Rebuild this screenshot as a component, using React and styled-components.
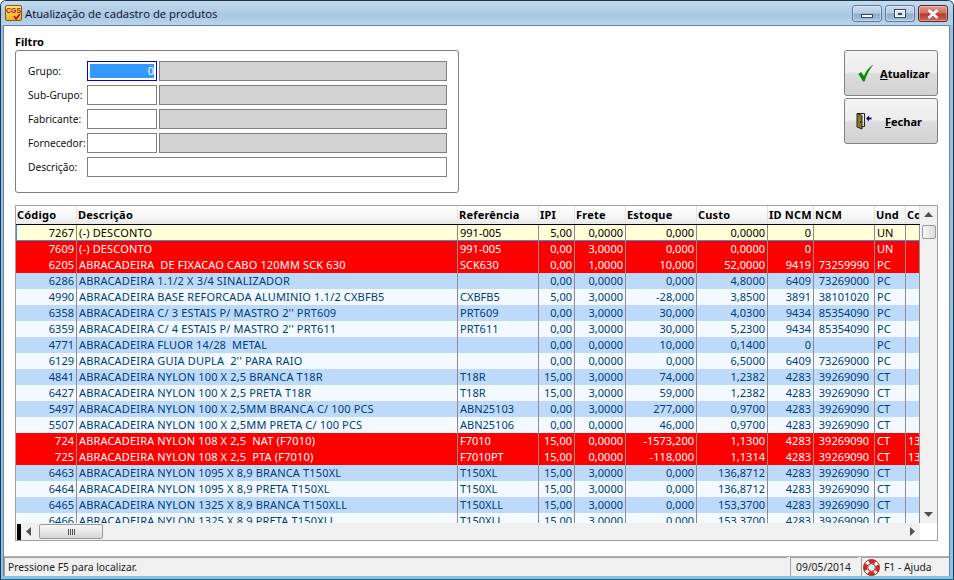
import React from 'react';
import styled, { createGlobalStyle } from 'styled-components';

const GlobalStyle = createGlobalStyle`
    html, body {
        margin: 0;
        padding: 0;
        background: #fff;
    }
    body {
        font-family: "Noto Sans", "Liberation Sans", sans-serif;
        font-size: 11px;
        color: #000;
    }
`;

const columns = [
    { key: 'id', title: 'Código', width: 61, align: 'right' },
    { key: 'desc', title: 'Descrição', width: 381, spaced: true },
    { key: 'ref', title: 'Referência', width: 81 },
    { key: 'ipi', title: 'IPI', width: 36, align: 'right' },
    { key: 'frete', title: 'Frete', width: 51, align: 'right' },
    { key: 'estoque', title: 'Estoque', width: 71, align: 'right' },
    { key: 'custo', title: 'Custo', width: 71, align: 'right' },
    { key: 'idNcm', title: 'ID NCM', width: 46, align: 'right' },
    { key: 'ncm', title: 'NCM', width: 61, align: 'center' },
    { key: 'und', title: 'Und', width: 31 },
    { key: 'co', title: 'Co', width: 14 },
];

const row = (id, desc, ref, ipi, frete, estoque, custo, idNcm, ncm, und, co = '', kind = 'normal') => (
    { id, desc, ref, ipi, frete, estoque, custo, idNcm, ncm, und, co, kind }
);

const rows = [
    row('7267', '(-) DESCONTO', '991-005', '5,00', '0,0000', '0,000', '0,0000', '0', '', 'UN', '', 'current'),
    row('7609', '(-) DESCONTO', '991-005', '0,00', '3,0000', '0,000', '0,0000', '0', '', 'UN', '', 'alert'),
    row('6205', 'ABRACADEIRA  DE FIXACAO CABO 120MM SCK 630', 'SCK630', '0,00', '1,0000', '10,000', '52,0000', '9419', '73259990', 'PC', '', 'alert'),
    row('6286', 'ABRACADEIRA 1.1/2 X 3/4 SINALIZADOR', '', '0,00', '0,0000', '0,000', '4,8000', '6409', '73269000', 'PC'),
    row('4990', 'ABRACADEIRA BASE REFORCADA ALUMINIO 1.1/2 CXBFB5', 'CXBFB5', '5,00', '3,0000', '-28,000', '3,8500', '3891', '38101020', 'PC'),
    row('6358', "ABRACADEIRA C/ 3 ESTAIS P/ MASTRO 2'' PRT609", 'PRT609', '0,00', '3,0000', '30,000', '4,0300', '9434', '85354090', 'PC'),
    row('6359', "ABRACADEIRA C/ 4 ESTAIS P/ MASTRO 2'' PRT611", 'PRT611', '0,00', '3,0000', '30,000', '5,2300', '9434', '85354090', 'PC'),
    row('4771', 'ABRACADEIRA FLUOR 14/28  METAL', '', '0,00', '0,0000', '10,000', '0,1400', '0', '', 'PC'),
    row('6129', "ABRACADEIRA GUIA DUPLA  2'' PARA RAIO", '', '0,00', '0,0000', '0,000', '6,5000', '6409', '73269000', 'PC'),
    row('4841', 'ABRACADEIRA NYLON 100 X 2,5 BRANCA T18R', 'T18R', '15,00', '3,0000', '74,000', '1,2382', '4283', '39269090', 'CT'),
    row('6427', 'ABRACADEIRA NYLON 100 X 2,5 PRETA T18R', 'T18R', '15,00', '3,0000', '59,000', '1,2382', '4283', '39269090', 'CT'),
    row('5497', 'ABRACADEIRA NYLON 100 X 2,5MM BRANCA C/ 100 PCS', 'ABN25103', '0,00', '3,0000', '277,000', '0,9700', '4283', '39269090', 'CT'),
    row('5507', 'ABRACADEIRA NYLON 100 X 2,5MM PRETA C/ 100 PCS', 'ABN25106', '0,00', '0,0000', '46,000', '0,9700', '4283', '39269090', 'CT'),
    row('724', 'ABRACADEIRA NYLON 108 X 2,5  NAT (F7010)', 'F7010', '15,00', '0,0000', '-1573,200', '1,1300', '4283', '39269090', 'CT', '13', 'alert'),
    row('725', 'ABRACADEIRA NYLON 108 X 2,5  PTA (F7010)', 'F7010PT', '15,00', '0,0000', '-118,000', '1,1314', '4283', '39269090', 'CT', '13', 'alert'),
    row('6463', 'ABRACADEIRA NYLON 1095 X 8,9 BRANCA T150XL', 'T150XL', '15,00', '3,0000', '0,000', '136,8712', '4283', '39269090', 'CT'),
    row('6464', 'ABRACADEIRA NYLON 1095 X 8,9 PRETA T150XL', 'T150XL', '15,00', '3,0000', '0,000', '136,8712', '4283', '39269090', 'CT'),
    row('6465', 'ABRACADEIRA NYLON 1325 X 8,9 BRANCA T150XLL', 'T150XLL', '15,00', '3,0000', '0,000', '153,3700', '4283', '39269090', 'CT'),
    row('6466', 'ABRACADEIRA NYLON 1325 X 8,9 PRETA T150XLL', 'T150XLL', '15,00', '3,0000', '0,000', '153,3700', '4283', '39269090', 'CT'),
];

const filters = [
    { label: 'Grupo:', focused: true },
    { label: 'Sub-Grupo:' },
    { label: 'Fabricante:' },
    { label: 'Fornecedor:' },
    { label: 'Descrição:', wide: true },
];

const Window = styled.div`
    width: 954px;
    height: 580px;
    box-sizing: border-box;
    display: flex;
    flex-direction: column;
    overflow: hidden;
    background: linear-gradient(180deg, #b9d1e8 0, #9dbfdf 25px, #8fc0e8 100%);
    border: 1px solid #1c3a4c;
    border-bottom-color: #0e6f80;
    border-radius: 6px 6px 0 0;
`;

const TitleBar = styled.div`
    height: 24px;
    flex: none;
    display: flex;
    align-items: center;
    padding: 0 5px 0 4px;
    background: linear-gradient(180deg, #c6dbee 0, #a9c7e3 60%, #b9d4ec 100%);
`;

const TitleText = styled.span`
    font-family: "Open Sans", "Noto Sans", sans-serif;
    font-size: 11.3px;
    margin-left: 3px;
    color: #0b0b20;
    flex: 1;
`;

const Logo = styled.div`
    width: 17px;
    height: 16px;
    position: relative;
    background: linear-gradient(180deg, #ffe77a, #f2b21c);
    border: 1px solid #8a5a10;
    box-sizing: border-box;
    border-radius: 2px;
    font: bold 7px "Liberation Sans", sans-serif;
    color: #b01010;
    text-align: center;
    line-height: 9px;
    overflow: hidden;
`;

const LogoCheck = styled.svg`
    position: absolute;
    right: 0;
    bottom: 0;
`;

const WinButtons = styled.div`
    display: flex;
    gap: 3px;
    align-self: flex-start;
    margin-top: 4px;
`;

const WinButton = styled.div`
    width: 30px;
    height: 17px;
    box-sizing: border-box;
    display: flex;
    align-items: center;
    justify-content: center;
    border: 1px solid ${p => (p.$close ? '#5a2a26' : '#5e7c99')};
    border-radius: 3px;
    background: ${p => (p.$close
        ? 'linear-gradient(180deg, #e09a90 0, #cf6f62 45%, #b8392b 55%, #c96a5c 100%)'
        : 'linear-gradient(180deg, #cbdcec 0, #b4cde4 45%, #8eadc9 55%, #a9c6df 100%)')};
    box-shadow: inset 0 0 0 1px rgba(255, 255, 255, .35);
`;

const MinGlyph = styled.div`
    width: 12px;
    height: 4px;
    margin-top: 5px;
    box-sizing: border-box;
    background: #fff;
    border: 1px solid #34495e;
`;

const MaxGlyph = styled.div`
    width: 12px;
    height: 9px;
    box-sizing: border-box;
    border: 1px solid #34495e;
    background: #d6e4f0;
    box-shadow: inset 0 0 0 1px #fff;
    display: flex;
    align-items: center;
    justify-content: center;
    &::after {
        content: '';
        width: 4px;
        height: 2px;
        background: #34495e;
    }
`;

const Frame = styled.div`
    flex: 1;
    min-height: 0;
    display: flex;
    flex-direction: column;
    margin: 0 3px 3px 2px;
    background: #fff;
    border: 1px solid #5f88aa;
    border-bottom: 0;
`;

const Content = styled.div`
    flex: 1;
    min-height: 0;
    display: flex;
    flex-direction: column;
    padding: 0 11px 0 11px;
`;

const TopArea = styled.div`
    display: flex;
    justify-content: space-between;
    height: 179px;
    flex: none;
`;

const FilterGroup = styled.div`
    width: 444px;
    padding-top: 9px;
`;

const GroupTitle = styled.div`
    font-weight: 700;
    font-size: 11px;
    line-height: 14px;
    height: 15px;
`;

const GroupBox = styled.div`
    width: 444px;
    height: 143px;
    box-sizing: border-box;
    border: 1px solid #808080;
    border-radius: 3px;
    padding: 10px 0 0 12px;
    display: flex;
    flex-direction: column;
    gap: 4px;
`;

const FilterRow = styled.div`
    display: flex;
    align-items: center;
    height: 20px;
`;

const FilterLabel = styled.div`
    width: 59px;
    flex: none;
    padding-bottom: 1px;
    font-size: 10.2px;
    color: #101010;
    white-space: nowrap;
`;

const CodeBox = styled.div`
    box-sizing: border-box;
    width: ${p => (p.$wide ? '360px' : '70px')};
    height: 20px;
    background: #fff;
    border: 1px solid ${p => (p.$focused ? '#0000e0' : '#808080')};
    padding: 2px;
    display: flex;
`;

const SelectedValue = styled.div`
    flex: 1;
    background: #3399ff;
    color: #fff;
    text-align: right;
    line-height: 14px;
    font-size: 11px;
`;

const NameBox = styled.div`
    box-sizing: border-box;
    width: 288px;
    height: 20px;
    margin-left: 2px;
    background: #d2d2d2;
    border: 1px solid #808080;
`;

const ActionColumn = styled.div`
    width: 94px;
    margin-top: 24px;
    display: flex;
    flex-direction: column;
    gap: 2px;
`;

const ActionButton = styled.div`
    box-sizing: border-box;
    height: 46px;
    display: flex;
    align-items: center;
    border: 1px solid #808080;
    border-radius: 3px;
    background: linear-gradient(180deg, #f4f4f4 0, #ececec 48%, #dcdcdc 52%, #d2d2d2 100%);
    font-weight: 700;
    font-size: 11px;
    color: #000;
    padding-left: ${p => p.$pad}px;
    gap: ${p => p.$gap}px;
    u {
        text-decoration: underline;
    }
`;

const Grid = styled.div`
    box-sizing: border-box;
    width: 923px;
    height: 336px;
    flex: none;
    border: 1px solid #a0a0a0;
    background: #fff;
    display: grid;
    grid-template-columns: 904px 17px;
    grid-template-rows: 1fr 17px;
`;

const GridMain = styled.div`
    min-height: 0;
    overflow: hidden;
    display: flex;
    flex-direction: column;
`;

const HeaderRow = styled.div`
    display: flex;
    height: 18px;
    flex: none;
    background: linear-gradient(180deg, #ffffff 0, #f6f6f6 60%, #e9e9e9 100%);
    border-bottom: 1px solid #000;
`;

const HeaderCell = styled.div`
    box-sizing: border-box;
    width: ${p => p.$width}px;
    flex: none;
    padding-left: 1px;
    font-weight: 700;
    font-size: 11px;
    letter-spacing: .2px;
    line-height: 17px;
    overflow: hidden;
    white-space: nowrap;
    border-right: 1px solid #e2e2e2;
`;

const DataRow = styled.div`
    display: flex;
    height: 16px;
    flex: none;
    box-sizing: border-box;
    background: ${p => p.$bg};
    color: ${p => p.$fg};
    ${p => (p.$current ? 'box-shadow: inset 1px 0 0 #3a8ee0, inset 0 -1px 0 #3a8ee0;' : '')}
`;

const DataCell = styled.div`
    box-sizing: border-box;
    width: ${p => p.$width}px;
    flex: none;
    padding: 0 2px;
    font-size: 11px;
    letter-spacing: ${p => (p.$spaced ? '.16px' : '0')};
    line-height: 16px;
    text-align: ${p => p.$align || 'left'};
    white-space: pre;
    overflow: hidden;
    border-right: 1px solid #8c8c8c;
`;

const VerticalBar = styled.div`
    background: #f0f0f0;
    display: flex;
    flex-direction: column;
    align-items: center;
    justify-content: space-between;
    position: relative;
    padding-bottom: 6px;
`;

const VThumb = styled.div`
    position: absolute;
    top: 19px;
    left: 2px;
    width: 14px;
    height: 14px;
    box-sizing: border-box;
    border: 1px solid #9a9a9a;
    border-radius: 2px;
    background: linear-gradient(90deg, #f6f6f6, #dcdcdc);
`;

const HorizontalBar = styled.div`
    background: #f0f0f0;
    display: flex;
    align-items: center;
    padding-left: 1px;
`;

const BlackMark = styled.div`
    width: 4px;
    height: 16px;
    background: #000;
`;

const HThumb = styled.div`
    width: 64px;
    height: 15px;
    margin-left: 8px;
    box-sizing: border-box;
    border: 1px solid #9a9a9a;
    border-radius: 2px;
    background: linear-gradient(180deg, #f6f6f6 0, #e8e8e8 50%, #d4d4d4 100%);
    display: flex;
    align-items: center;
    justify-content: center;
    gap: 1px;
    i {
        width: 1px;
        height: 6px;
        background: #555;
    }
`;

const Corner = styled.div`
    background: #fff;
`;

const ArrowLeft = styled.svg`
    margin-left: 5px;
    flex: none;
`;

const ArrowRight = styled.svg`
    margin-left: auto;
    margin-right: 5px;
    flex: none;
`;

const ArrowV = styled.svg`
    margin-top: ${p => p.$top || 0}px;
    flex: none;
`;

const StatusBar = styled.div`
    margin-top: auto;
    height: 19px;
    flex: none;
    display: flex;
    gap: 3px;
    background: #f0f0f0;
    border-top: 1px solid #b0b0b0;
    font-size: 10.3px;
`;

const StatusPanel = styled.div`
    box-sizing: border-box;
    width: ${p => p.$width}px;
    flex: ${p => (p.$grow ? 1 : 'none')};
    display: flex;
    align-items: center;
    gap: 4px;
    padding-left: ${p => p.$pad || 3}px;
    border-left: 1px solid #a0a0a0;
    border-top: 1px solid #a0a0a0;
    color: #202020;
`;

const Lifebuoy = () => (
    <svg width="17" height="17" viewBox="0 0 17 17">
        <circle cx="8.5" cy="8.5" r="6" fill="none" stroke="#d42a1a" strokeWidth="4" />
        <circle cx="8.5" cy="8.5" r="6" fill="none" stroke="#fff" strokeWidth="4" strokeDasharray="3.5 5.9" strokeDashoffset="1.7" transform="rotate(45 8.5 8.5)" />
        <circle cx="8.5" cy="8.5" r="8" fill="none" stroke="#8c1a10" strokeWidth=".8" />
        <circle cx="8.5" cy="8.5" r="3.8" fill="#e8eef2" stroke="#8c1a10" strokeWidth=".8" />
    </svg>
);

const CheckIcon = () => (
    <svg width="16" height="18" viewBox="0 0 16 18">
        <path d="M0.5 10 L3 8 L6 12 C8 7 11 3 15.5 0.5 C11.5 5 8.5 11 6.5 17.5 L5 17.5 Z" fill="#0a8a0a" />
    </svg>
);

const DoorIcon = () => (
    <svg width="18" height="18" viewBox="0 0 18 18">
        <path d="M2 1.5 H9.5 V14.5 H7" fill="none" stroke="#222" strokeWidth="1" />
        <path d="M2 1.5 L7 3.5 V17 L2 15 Z" fill="#8c7a1c" stroke="#222" strokeWidth="1" />
        <rect x="5" y="9" width="1" height="2" fill="#222" />
        <path d="M11 6.5 L14 3.5 V5.5 H16.5 V7.5 H14 V9.5 Z" fill="#0a0a8a" />
    </svg>
);

const rowColors = (item, index) => {
    if (item.kind === 'current') return { bg: '#ffffd8', fg: '#000' };
    if (item.kind === 'alert') return { bg: '#ff0000', fg: '#fff' };
    return { bg: index % 2 ? '#bddafb' : '#f2faff', fg: '#003a7a' };
};

export default function App() {
    return (
        <>
            <GlobalStyle />
            <Window>
                <TitleBar>
                    <Logo>
                        CGS
                        <LogoCheck width="8" height="7" viewBox="0 0 8 7">
                            <path d="M1 3 L3 6 L7 1" fill="none" stroke="#b01010" strokeWidth="1.6" />
                        </LogoCheck>
                    </Logo>
                    <TitleText>Atualização de cadastro de produtos</TitleText>
                    <WinButtons>
                        <WinButton><MinGlyph /></WinButton>
                        <WinButton><MaxGlyph /></WinButton>
                        <WinButton $close>
                            <svg width="14" height="10" viewBox="0 0 14 10">
                                <path d="M2.5 1 L11.5 9 M11.5 1 L2.5 9" stroke="#fff" strokeWidth="2.6" />
                            </svg>
                        </WinButton>
                    </WinButtons>
                </TitleBar>
                <Frame>
                    <Content>
                        <TopArea>
                            <FilterGroup>
                                <GroupTitle>Filtro</GroupTitle>
                                <GroupBox>
                                    {filters.map(f => (
                                        <FilterRow key={f.label}>
                                            <FilterLabel>{f.label}</FilterLabel>
                                            <CodeBox $focused={f.focused} $wide={f.wide}>
                                                {f.focused && <SelectedValue>0</SelectedValue>}
                                            </CodeBox>
                                            {!f.wide && <NameBox />}
                                        </FilterRow>
                                    ))}
                                </GroupBox>
                            </FilterGroup>
                            <ActionColumn>
                                <ActionButton $pad={13} $gap={6}>
                                    <CheckIcon />
                                    <span><u>A</u>tualizar</span>
                                </ActionButton>
                                <ActionButton $pad={10} $gap={12}>
                                    <DoorIcon />
                                    <span><u>F</u>echar</span>
                                </ActionButton>
                            </ActionColumn>
                        </TopArea>
                        <Grid>
                            <GridMain>
                                <HeaderRow>
                                    {columns.map(c => (
                                        <HeaderCell key={c.key} $width={c.width}>{c.title}</HeaderCell>
                                    ))}
                                </HeaderRow>
                                {rows.map((item, i) => {
                                    const { bg, fg } = rowColors(item, i);
                                    return (
                                        <DataRow key={item.id} $bg={bg} $fg={fg} $current={item.kind === 'current'}>
                                            {columns.map(c => (
                                                <DataCell key={c.key} $width={c.width} $align={c.align} $spaced={c.spaced}>{item[c.key]}</DataCell>
                                            ))}
                                        </DataRow>
                                    );
                                })}
                            </GridMain>
                            <VerticalBar>
                                <ArrowV $top={6} width="9" height="5" viewBox="0 0 9 5">
                                    <path d="M4.5 0 L9 5 H0 Z" fill="#505050" />
                                </ArrowV>
                                <VThumb />
                                <ArrowV width="9" height="5" viewBox="0 0 9 5">
                                    <path d="M4.5 5 L9 0 H0 Z" fill="#505050" />
                                </ArrowV>
                            </VerticalBar>
                            <HorizontalBar>
                                <BlackMark />
                                <ArrowLeft width="5" height="9" viewBox="0 0 5 9">
                                    <path d="M0 4.5 L5 0 V9 Z" fill="#505050" />
                                </ArrowLeft>
                                <HThumb><i /><i /><i /><i /></HThumb>
                                <ArrowRight width="5" height="9" viewBox="0 0 5 9">
                                    <path d="M5 4.5 L0 0 V9 Z" fill="#505050" />
                                </ArrowRight>
                            </HorizontalBar>
                            <Corner />
                        </Grid>
                    </Content>
                    <StatusBar>
                        <StatusPanel $grow>Pressione F5 para localizar.</StatusPanel>
                        <StatusPanel $width={68} $pad={5}>09/05/2014</StatusPanel>
                        <StatusPanel $width={88} $pad={1}>
                            <Lifebuoy />
                            F1 - Ajuda
                        </StatusPanel>
                    </StatusBar>
                </Frame>
            </Window>
        </>
    );
}
